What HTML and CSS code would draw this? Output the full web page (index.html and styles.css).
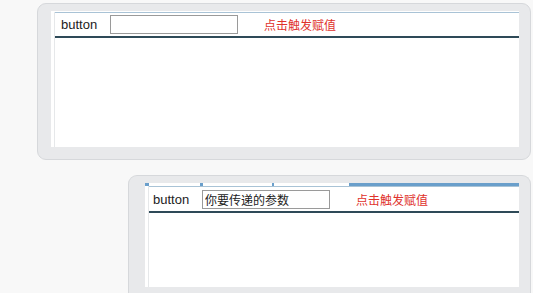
FILE: index.html
```html
<!DOCTYPE html>
<html lang="zh">

<head>
    <meta charset="UTF-8">
    <title>传值示例</title>
    <link rel="stylesheet" href="styles.css">
</head>

<body>
    <!-- Parent frame -->
    <div class="frame frame-parent">
        <div class="frame-body">
            <div class="frame-inner">
                <div class="toolbar">
                    <span class="btn-label">button</span>
                    <input type="text" class="param-input" value="">
                    <a href="#" class="trigger-link">点击触发赋值</a>
                </div>
            </div>
        </div>
    </div>

    <!-- Child frame -->
    <div class="frame frame-child">
        <div class="frame-body">
            <div class="tab-strip">
                <span class="tick tick-a"></span>
                <span class="tick tick-b"></span>
                <span class="tick tick-c"></span>
                <span class="tick tick-bar"></span>
            </div>
            <div class="frame-inner">
                <div class="toolbar">
                    <span class="btn-label">button</span>
                    <input type="text" class="param-input" value="你要传递的参数">
                    <a href="#" class="trigger-link">点击触发赋值</a>
                </div>
            </div>
        </div>
    </div>
</body>

</html>
```

FILE: styles.css
```css
/* Global Styles */

* {
    box-sizing: border-box;
    margin: 0;
    padding: 0;
}

html,
body {
    background-color: #f8f8f8;
    font-family: "Liberation Sans", "Noto Sans CJK SC", sans-serif;
    overflow: hidden;
    height: 100%;
}

/* Frames */

.frame {
    background-color: #e8e9eb;
    border: 1px solid #d6d8db;
    border-radius: 9px;
    display: flex;
}

.frame-parent {
    margin: 3px 0 0 37px;
    width: 494px;
    height: 157px;
    padding: 7px 11px 12px 13px;
}

.frame-child {
    margin: 15px 0 0 128px;
    width: 403px;
    height: 118px;
    padding: 7px 11px 6px 16px;
    border-bottom: none;
    border-radius: 9px 9px 0 0;
}

.frame-body {
    flex: 1;
    background-color: #ffffff;
    display: flex;
    flex-direction: column;
    padding-left: 3px;
}

.frame-parent .frame-body {
    padding-top: 1px;
}

.frame-inner {
    flex: 1;
    border-left: 1px solid #e6e8ea;
}

/* Tab strip above the child toolbar */

.tab-strip {
    display: flex;
    height: 3px;
    margin-left: -3px;
}

.tick {
    display: block;
    height: 3px;
    background-color: #6a9fcb;
}

.tick-a {
    width: 4px;
}

.tick-b {
    width: 3px;
    margin-left: 51px;
}

.tick-c {
    width: 2px;
    margin-left: 69px;
}

.tick-bar {
    flex: 1;
    margin-left: 75px;
}

/* Toolbar */

.toolbar {
    display: flex;
    align-items: center;
    border-top: 1px solid #a9c3d6;
    border-bottom: 2px solid #2e4a58;
    padding-left: 6px;
}

.frame-parent .toolbar {
    height: 26px;
}

.frame-child .toolbar {
    height: 27px;
    padding-left: 4px;
}

.btn-label {
    font-size: 13px;
    color: #222222;
    width: 49px;
}

.param-input {
    width: 128px;
    height: 19px;
    border: 1px solid #9a9a9a;
    background-color: #ffffff;
    font-family: "Noto Sans CJK SC", "Liberation Sans", sans-serif;
    font-size: 12px;
    color: #222222;
    padding: 0 2px;
    outline: none;
}

.trigger-link {
    margin-left: 26px;
    font-family: "Noto Sans CJK SC", sans-serif;
    font-size: 12px;
    color: #e0322c;
    text-decoration: none;
}
```
